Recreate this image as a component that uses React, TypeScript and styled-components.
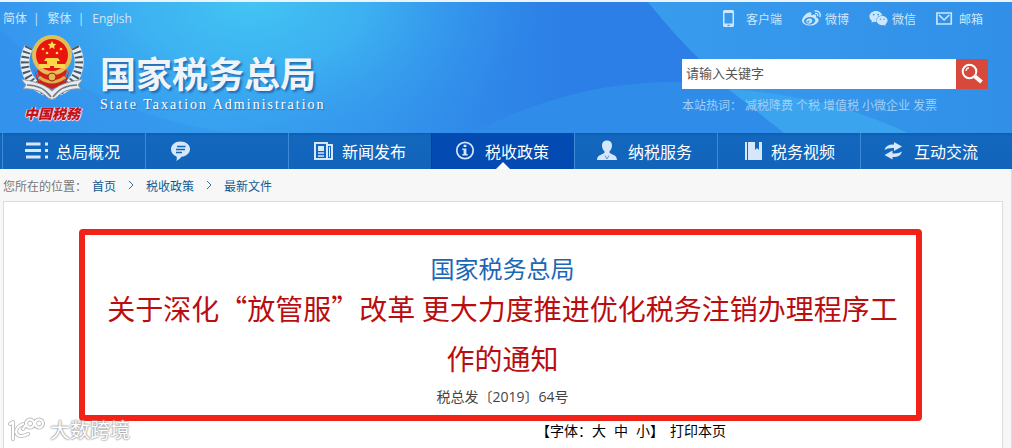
import React from "react";
import styled, { createGlobalStyle } from "styled-components";
import { FaWeibo, FaWeixin } from "react-icons/fa";

const cjk = `"Noto Sans CJK SC", "Open Sans", sans-serif`;
const mixed = `"Open Sans", "Noto Sans CJK SC", sans-serif`;

const GlobalStyle = createGlobalStyle`
  *, *::before, *::after { box-sizing: border-box; }
  html, body { margin: 0; background: #f7f7f7; }
  body { font-family: ${cjk}; font-size: 12px; color: #333; }
  h1, h2, p, ul, ol { margin: 0; padding: 0; font-weight: 400; }
  li { list-style: none; }
  a { color: inherit; text-decoration: none; }
  button { font: inherit; color: inherit; border: 0; background: none; padding: 0; cursor: pointer; }
`;

const Page = styled.div`
  position: relative;
  min-height: 100vh;
  display: flex;
  flex-direction: column;
  border-top: 2px solid #eaf4fa;
`;

const Header = styled.header`
  position: relative;
  display: flex;
  justify-content: space-between;
  min-height: 131px;
  padding: 0 24px 0 3px;
  background: #2d7fe6;
  color: #cde6fc;
`;

const Backdrop = styled.svg`
  position: absolute;
  inset: 0;
  width: 100%;
  height: 100%;
`;

const BrandSide = styled.div`
  position: relative;
`;

const ToolSide = styled.div`
  position: relative;
  width: 306px;
`;

const Languages = styled.nav`
  display: flex;
  align-items: center;
  height: 32px;
  font-family: ${mixed};

  a + a::before {
    content: "|";
    margin: 0 8px 0 6px;
  }
`;

const Brand = styled.div`
  display: flex;
  gap: 16px;
  padding-left: 17px;
`;

const Emblem = styled.div`
  display: flex;
  flex-direction: column;
  align-items: center;
  width: 64px;
`;

const EmblemText = styled.span`
  font-size: 14px;
  line-height: 18px;
  font-style: italic;
  font-weight: 900;
  color: #c4121a;
  text-shadow: 1px 0 #f4dfe6, 0 1px #f4dfe6, -1px 0 #f4dfe6;
`;

const BrandName = styled.div`
  padding-top: 14px;
`;

const BrandTitle = styled.p`
  font-size: 36px;
  line-height: 48px;
  font-weight: 700;
  color: #f0f4f9;
  text-shadow: 2px 2px 2px rgba(20, 70, 140, 0.6);
`;

const BrandSubtitle = styled.p`
  font-family: "Liberation Serif", serif;
  font-size: 14px;
  line-height: 18px;
  letter-spacing: 2px;
  color: #fff;
  text-shadow: 1px 1px 1px rgba(20, 70, 140, 0.6);
`;

const QuickLinks = styled.ul`
  display: flex;
  justify-content: flex-end;
  gap: 20px;
  height: 32px;
  padding-right: 5px;

  a {
    display: flex;
    align-items: center;
    gap: 4px;
    height: 32px;
  }
  svg { width: 19px; height: 19px; }
`;

const Search = styled.form`
  display: flex;
  height: 30px;
  margin-top: 25px;
`;

const SearchInput = styled.input`
  flex: 1;
  min-width: 0;
  border: 0;
  border-radius: 0;
  padding: 0 4px 4px;
  background: #fff;
  font-family: ${cjk};
  font-size: 13px;
  color: #444;
  outline: none;
  &::placeholder { color: #555; opacity: 1; }
`;

const SearchButton = styled.button`
  display: grid;
  place-items: center;
  width: 32px;
  background: #d8493b;
`;

const HotWords = styled.p`
  display: flex;
  gap: 3px;
  margin-top: 4px;
  line-height: 24px;
  color: #9fcff8;
`;

const MainNav = styled.nav`
  background: linear-gradient(#0f5cb0, #1367bd 3px, #1264bb);
  padding: 0 9px 0 2px;

  ul {
    display: grid;
    grid-template-columns: repeat(7, 1fr);
  }
`;

const NavLink = styled.a<{ $active?: boolean }>`
  position: relative;
  display: flex;
  align-items: center;
  gap: 7px;
  height: 36px;
  padding-left: 22px;
  border-left: 1px solid;
  border-color: ${(p) => (p.$active ? "#0a3f96" : "#3f8ad6")};
  background: ${(p) => (p.$active ? "#034bb2" : "transparent")};
  font-size: 16px;
  color: #fff;
  white-space: nowrap;

  svg { flex: none; width: 24px; height: 24px; color: #d5e7f9; }

  &::after {
    content: "";
    display: ${(p) => (p.$active ? "block" : "none")};
    position: absolute;
    left: 50%;
    bottom: 0;
    margin-left: -7px;
    border: 7px solid transparent;
    border-top: 0;
    border-bottom-color: #fafcfe;
  }
`;

const Main = styled.main`
  flex: 1;
  display: flex;
  flex-direction: column;
  border-right: 1px solid #ddd;
  padding: 0 8px 0 3px;
`;

const Breadcrumb = styled.nav`
  display: flex;
  align-items: center;
  height: 32px;
  color: #777;

  ol { display: flex; margin-left: 5px; }
  li { display: flex; align-items: center; color: #0f5a92; }
  svg { margin: 0 12px; }
`;

const Panel = styled.section`
  flex: 1;
  border: 1px solid #dcdcdc;
  border-bottom: 0;
  background: #fff;
`;

const Notice = styled.article`
  margin: 27px 80px 0 75px;
  padding: 18px 8px 4px 12px;
  border: 6px solid #f32218;
  border-radius: 4px;
  text-align: center;
`;

const Issuer = styled.h2`
  font-size: 24px;
  line-height: 30px;
  color: #1c66b5;
`;

const Title = styled.h1`
  font-size: 28px;
  line-height: 50px;
  color: #b90d10;
`;

const DocNumber = styled.p`
  font-family: ${mixed};
  font-size: 14px;
  line-height: 28px;
  color: #444;
`;

const PageTools = styled.div`
  display: flex;
  justify-content: flex-end;
  gap: 6px;
  padding-right: 276px;
  font-size: 14px;
  line-height: 18px;
  color: #000;
`;

const SizeButton = styled.button`
  & + & { margin-left: 8px; }
`;

const Watermark = styled.div`
  position: absolute;
  left: 8px;
  bottom: 4px;
  display: flex;
  align-items: center;
  gap: 4px;
  font-size: 20px;
  line-height: 28px;
  color: #fff;
  text-shadow: 0 0 2px #999, 0 0 2px #999, 0 0 1px #aaa;
`;

const HeaderArt = () => (
  <Backdrop viewBox="0 0 1012 131" preserveAspectRatio="none" aria-hidden="true">
    <defs>
      <linearGradient id="base" x1="0" y1="0" x2="1" y2="0">
        <stop offset="0" stopColor="#3595ee" />
        <stop offset="0.2" stopColor="#379ff0" />
        <stop offset="0.36" stopColor="#3496ec" />
        <stop offset="0.56" stopColor="#2c7fe6" />
        <stop offset="1" stopColor="#2c7fe6" />
      </linearGradient>
      <radialGradient id="glow" gradientUnits="userSpaceOnUse" cx="0" cy="0" r="1" gradientTransform="translate(250 0) scale(290 170)">
        <stop offset="0" stopColor="#43c4f3" />
        <stop offset="0.4" stopColor="#3fb9f2" stopOpacity="0.75" />
        <stop offset="1" stopColor="#3595ee" stopOpacity="0" />
      </radialGradient>
      <linearGradient id="right" x1="0" y1="0" x2="1" y2="0">
        <stop offset="0" stopColor="#389ced" />
        <stop offset="1" stopColor="#318fe8" />
      </linearGradient>
    </defs>
    <path d="M0 0H1012V131H0Z" fill="url(#base)" />
    <path d="M0 0H1012V131H0Z" fill="url(#glow)" />
    <path d="M0 28Q90 110 230 131H0Z" fill="#2f86e8" opacity="0.2" />
    <path d="M648 0H1012V131H790Q710 78 648 0Z" fill="url(#right)" />
    <path d="M472 131Q570 80 672 80Q702 80 728 87L784 131Z" fill="#2f8de9" />
    <path d="M728 87Q830 94 908 131H784Z" fill="#3ba4ef" />
  </Backdrop>
);

const EmblemArt = () => (
  <svg width="64" height="70" viewBox="0 0 64 70" aria-hidden="true">
    <path d="M9 13C1 27 4 48 25 57" fill="none" stroke="#e9eef2" strokeWidth="9" />
    <path d="M55 13C63 27 60 48 39 57" fill="none" stroke="#e9eef2" strokeWidth="9" />
    <path d="M9 13C1 27 4 48 25 57" fill="none" stroke="#4a5964" strokeWidth="8" strokeDasharray="2 3" />
    <path d="M55 13C63 27 60 48 39 57" fill="none" stroke="#4a5964" strokeWidth="8" strokeDasharray="2 3" />
    <path d="M14 34L19 47H45L50 34L46 50L32 55L18 50Z" fill="#c92118" />
    <path d="M17 36H47L44 48H20Z" fill="#d8201a" />
    <path d="M19 43Q32 53 45 43" fill="none" stroke="#dcb04b" strokeWidth="3" />
    <circle cx="32" cy="21" r="18" fill="#e8150f" stroke="#e3bd55" strokeWidth="4" />
    <path d="M32 7l1.300 2.700 3 .4-2.200 2 .6 3-2.700-1.500-2.700 1.500.6-3-2.200-2 3-.4z" fill="#ffe352" />
    <g fill="#ffd84a">
      <circle cx="23" cy="15" r="1.300" />
      <circle cx="41" cy="15" r="1.300" />
      <circle cx="27" cy="19" r="1.300" />
      <circle cx="37" cy="19" r="1.300" />
      <path d="M26 24h12l2 3H24zM27 27h10v3H27zM19 30h26v4H19z" />
    </g>
    <path d="M30 34v-2h4v2z" fill="#d41a12" />
    <circle cx="32" cy="43" r="4" fill="#e6b94e" stroke="#a92318" />
    <path d="M1 45C10 47 24 49 32 57C40 49 54 47 63 45L58 51L61 55C50 54 41 58 36 64Q32 67 28 64C23 58 14 54 3 55L6 51Z" fill="#e8ecef" stroke="#8a949c" strokeWidth="1" />
    <path d="M7 51C18 51 26 56 31 63M57 51C46 51 38 56 33 63" fill="none" stroke="#707b84" strokeWidth="1.500" />
  </svg>
);

const PhoneIcon = () => (
  <svg viewBox="0 0 19 19" aria-hidden="true">
    <path fillRule="evenodd" d="M1.500 1h8A1.500 1.500 0 0 1 11 2.500v14A1.500 1.500 0 0 1 9.500 18h-8A1.500 1.500 0 0 1 0 16.500v-14A1.500 1.500 0 0 1 1.500 1zM1.500 4v10.500h8V4zM4.500 15.700v1.200h2v-1.200z" fill="currentColor" />
  </svg>
);

const MailIcon = () => (
  <svg viewBox="0 0 19 19" fill="none" stroke="currentColor" strokeWidth="1.600" aria-hidden="true">
    <path d="M.9 4h14.400v11H.9zM3 6l5.100 5L13.200 6" />
  </svg>
);

const ListIcon = () => (
  <svg viewBox="0 0 24 24" fill="currentColor" aria-hidden="true">
    <path d="M1 3.500h14.500v3H1zM0 10h16v3H0zM1 16.500h14.500v3H1zM20 3.500h3v3h-3zM20 10h3v3h-3zM20 16.500h3v3h-3z" />
  </svg>
);

const CommentIcon = () => (
  <svg viewBox="0 0 24 24" aria-hidden="true">
    <path d="M12.500 2.500c5.500 0 9.500 3.200 9.500 7.500 0 4.200-4 7.200-8.500 7.800Q12 20.500 8 22Q9.500 19.500 8.500 17.500C5 16.300 3 13.500 3 10.300C3 6 7 2.500 12.500 2.500z" fill="currentColor" />
    <path d="M9 7.500h8.500M8 10.500h9M8 13.500h6" stroke="#1264bb" strokeWidth="1.400" />
  </svg>
);

const NewsIcon = () => (
  <svg viewBox="0 0 24 24" fill="none" stroke="currentColor" strokeWidth="2" aria-hidden="true">
    <path d="M4 4h12v16H4zM16 6h5v14h-6" />
    <path d="M7 7h6v5H7z" fill="currentColor" stroke="none" />
    <path d="M7 14h6M7 17h6" strokeWidth="1.300" />
    <path d="M18.500 8v10" strokeWidth="1" />
  </svg>
);

const InfoIcon = () => (
  <svg viewBox="0 0 24 24" fill="none" stroke="currentColor" aria-hidden="true">
    <circle cx="11" cy="11.500" r="8.200" strokeWidth="1.700" />
    <path d="M9.600 5.800h2.800v2.200H9.600zM8.300 9.500h4.100v5.500h1.300v1.600H8.300V15h1.300v-3.900H8.300z" fill="currentColor" stroke="none" />
  </svg>
);

const PersonIcon = () => (
  <svg viewBox="0 0 24 24" fill="currentColor" aria-hidden="true">
    <path d="M10 1.500c3.500 0 5 2.300 5 5 0 2.500-1 4.600-2.400 5.600v1.800C15 15.500 20 16 20 21H0c0-5 5-5.500 7.400-7.100v-1.800C6 11.100 5 9 5 6.500c0-2.700 1.500-5 5-5z" />
    <path d="M8 16.500l2 3.500 2-3.500" fill="none" stroke="#1264bb" strokeWidth=".6" />
  </svg>
);

const BookIcon = () => (
  <svg viewBox="0 0 24 24" fill="currentColor" aria-hidden="true">
    <path d="M5 3h2v18H5zM8 3h7v8l2-2 2 2V3h3v18H8z" />
  </svg>
);

const ExchangeIcon = () => (
  <svg viewBox="0 0 24 24" fill="currentColor" aria-hidden="true">
    <path d="M1.500 11Q3 5 11 5.500V3l8 4.500L11 12V9Q5 8.500 1.500 11z" />
    <path d="M19 12.500Q17.500 18.500 9.500 18v2.500L1.500 16l8-4.500v3Q15.500 15 19 12.500z" />
  </svg>
);

const SearchIcon = () => (
  <svg width="22" height="22" viewBox="0 0 22 22" fill="none" stroke="#fff" aria-hidden="true">
    <circle cx="8.500" cy="8.500" r="6.800" strokeWidth="2" />
    <path d="M5 8Q5.200 5.200 8 4.900" strokeWidth="1.200" />
    <path d="M14 13.500L20.500 19" strokeWidth="4" />
  </svg>
);

const Chevron = () => (
  <svg width="6" height="10" viewBox="0 0 6 10" fill="none" stroke="#39708f" aria-hidden="true">
    <path d="M1 1l4 4-4 4" />
  </svg>
);

const WatermarkArt = () => {
  const lines = "M2 7L5 5V22M15 7Q8 10 8 15Q10 22 20 17M26 6A4 4 0 1 1 25.900 5.500M35 6A4 4 0 1 1 34.900 5.500M17 9L15 12";
  return (
    <svg width="38" height="26" viewBox="0 0 38 26" fill="none" strokeLinecap="round" strokeLinejoin="round" aria-hidden="true">
      <path d={lines} stroke="#bdbdbd" strokeWidth="4" />
      <path d={lines} stroke="#fff" strokeWidth="2.200" />
    </svg>
  );
};

const quickLinks = [
  { label: "客户端", icon: <PhoneIcon /> },
  { label: "微博", icon: <FaWeibo /> },
  { label: "微信", icon: <FaWeixin /> },
  { label: "邮箱", icon: <MailIcon /> },
];

const sections = [
  { label: "总局概况", icon: <ListIcon /> },
  { label: "", icon: <CommentIcon /> },
  { label: "新闻发布", icon: <NewsIcon /> },
  { label: "税收政策", icon: <InfoIcon />, active: true },
  { label: "纳税服务", icon: <PersonIcon /> },
  { label: "税务视频", icon: <BookIcon /> },
  { label: "互动交流", icon: <ExchangeIcon /> },
];

const hotWords = ["减税降费", "个税", "增值税", "小微企业", "发票"];
const trail = ["首页", "税收政策", "最新文件"];

export default function App() {
  return (
    <Page lang="zh-CN">
      <GlobalStyle />
      <Header>
        <HeaderArt />
        <BrandSide>
          <Languages>
            <a href="#hans">简体</a>
            <a href="#hant">繁体</a>
            <a href="#en">English</a>
          </Languages>
          <Brand>
            <Emblem>
              <EmblemArt />
              <EmblemText>中国税務</EmblemText>
            </Emblem>
            <BrandName>
              <BrandTitle>国家税务总局</BrandTitle>
              <BrandSubtitle>State Taxation Administration</BrandSubtitle>
            </BrandName>
          </Brand>
        </BrandSide>
        <ToolSide>
          <QuickLinks>
            {quickLinks.map((link) => (
              <li key={link.label}>
                <a href="#link">{link.icon}{link.label}</a>
              </li>
            ))}
          </QuickLinks>
          <Search role="search" onSubmit={(e) => e.preventDefault()}>
            <SearchInput type="text" aria-label="请输入关键字" placeholder="请输入关键字" />
            <SearchButton type="submit" aria-label="搜索"><SearchIcon /></SearchButton>
          </Search>
          <HotWords>
            <span>本站热词：</span>
            {hotWords.map((word) => <a href="#word" key={word}>{word}</a>)}
          </HotWords>
        </ToolSide>
      </Header>
      <MainNav>
        <ul>
          {sections.map((s, i) => (
            <li key={i}>
              <NavLink href="#section" $active={s.active}>{s.icon}{s.label}</NavLink>
            </li>
          ))}
        </ul>
      </MainNav>
      <Main>
        <Breadcrumb>
          <span>您所在的位置：</span>
          <ol>
            {trail.map((name, i) => (
              <li key={name}>{i > 0 && <Chevron />}<a href="#trail">{name}</a></li>
            ))}
          </ol>
        </Breadcrumb>
        <Panel>
          <Notice>
            <Issuer>国家税务总局</Issuer>
            <Title>关于深化“放管服”改革 更大力度推进优化税务注销办理程序工作的通知</Title>
            <DocNumber>税总发〔2019〕64号</DocNumber>
          </Notice>
          <PageTools>
            <span>
              【字体：<SizeButton type="button">大</SizeButton>
              <SizeButton type="button">中</SizeButton>
              <SizeButton type="button">小</SizeButton>】
            </span>
            <button type="button">打印本页</button>
          </PageTools>
        </Panel>
      </Main>
      <Watermark>
        <WatermarkArt />
        大数跨境
      </Watermark>
    </Page>
  );
}
